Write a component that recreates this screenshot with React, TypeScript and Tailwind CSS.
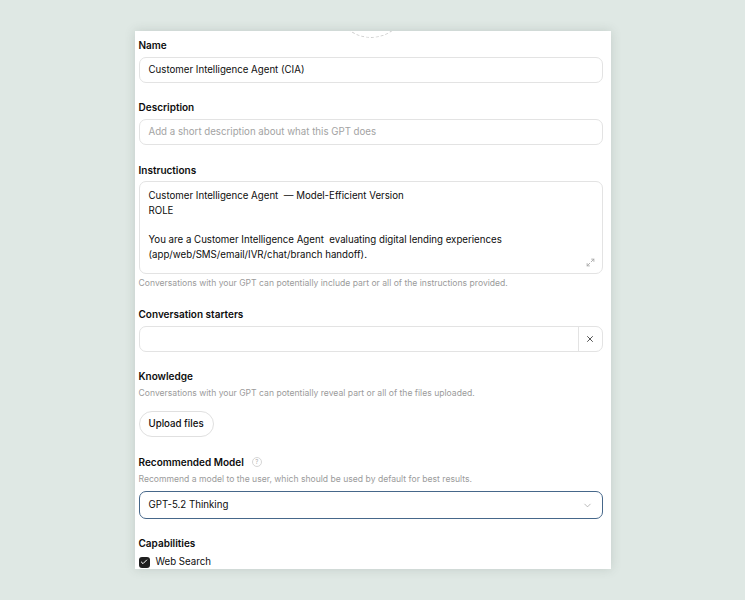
import { X, ChevronDown, Check } from "lucide-react";

function Label({ children, className = "" }: { children: React.ReactNode; className?: string }) {
    return (
        <div className={`h-[14px] leading-[14px] text-[10px] font-semibold text-[#0d0d0d] ${className}`}>
            {children}
        </div>
    );
}

function Hint({ children, className = "" }: { children: React.ReactNode; className?: string }) {
    return <div className={`h-[12px] leading-[12px] text-[8.6px] text-[#9b9b9b] ${className}`}>{children}</div>;
}

export default function App() {
    return (
        <div
            className="min-h-[600px] w-full bg-[#dfe8e4] flex justify-center pt-[31px]"
            style={{ fontFamily: "Inter, 'Liberation Sans', sans-serif" }}
        >
            <div className="w-[476px] h-[538px] bg-white overflow-hidden pl-[4px] pr-[8px] shadow-[0_0_10px_rgba(60,80,70,0.18)]">
                {/* avatar placeholder, scrolled off the top */}
                <div className="h-[7px] flex justify-center">
                    <div className="w-[72px] h-[72px] shrink-0 -mt-[65px] rounded-full border border-dashed border-[#cfcfcf]" />
                </div>

                {/* Name */}
                <Label>Name</Label>
                <div className="mt-[5px] h-[26px] rounded-[7px] border border-[#e3e3e3] px-[9px] flex items-center text-[9.7px] text-[#0d0d0d]">
                    Customer Intelligence Agent (CIA)
                </div>

                {/* Description */}
                <Label className="mt-[17px]">Description</Label>
                <div className="mt-[5px] h-[26px] rounded-[7px] border border-[#e3e3e3] px-[9px] flex items-center text-[9.7px] text-[#a3a3a3]">
                    Add a short description about what this GPT does
                </div>

                {/* Instructions */}
                <Label className="mt-[18px]">Instructions</Label>
                <div className="relative mt-[4px] h-[93px] rounded-[7px] border border-[#e3e3e3] px-[9px] pt-[7px] text-[9.7px] leading-[14.7px] text-[#0d0d0d]">
                    <div>Customer Intelligence Agent&nbsp; — Model-Efficient Version</div>
                    <div>ROLE</div>
                    <div className="h-[14.7px]" />
                    <div>You are a Customer Intelligence Agent&nbsp; evaluating digital lending experiences</div>
                    <div>(app/web/SMS/email/IVR/chat/branch handoff).</div>
                    <svg
                        className="absolute right-[7px] bottom-[6px]"
                        width="9"
                        height="9"
                        viewBox="0 0 12 12"
                        fill="none"
                        stroke="#a8a8a8"
                        strokeWidth="1.2"
                        strokeLinecap="round"
                    >
                        <path d="M7.5 1.5h3v3M10.5 1.5L7 5M4.5 10.5h-3v-3M1.5 10.5L5 7" />
                    </svg>
                </div>
                <Hint className="mt-[3px]">
                    Conversations with your GPT can potentially include part or all of the instructions provided.
                </Hint>

                {/* Conversation starters */}
                <Label className="mt-[18px]">Conversation starters</Label>
                <div className="mt-[5px] h-[26px] rounded-[7px] border border-[#e3e3e3] flex">
                    <div className="flex-1" />
                    <div className="w-[24px] border-l border-[#e3e3e3] flex items-center justify-center">
                        <X size={10} strokeWidth={2} className="text-[#333]" />
                    </div>
                </div>

                {/* Knowledge */}
                <Label className="mt-[17px]">Knowledge</Label>
                <Hint className="mt-[4px]">
                    Conversations with your GPT can potentially reveal part or all of the files uploaded.
                </Hint>
                <div className="mt-[12px] h-[26px] flex">
                    <button className="h-[26px] px-[9px] rounded-full border border-[#e0e0e0] text-[9.7px] font-medium text-[#0d0d0d]">
                        Upload files
                    </button>
                </div>

                {/* Recommended Model */}
                <div className="mt-[18px] h-[14px] flex items-center gap-[8px]">
                    <Label>Recommended Model</Label>
                    <div className="w-[10px] h-[10px] rounded-full border border-[#d6d6d6] flex items-center justify-center text-[6px] leading-none text-[#b0b0b0]">
                        ?
                    </div>
                </div>
                <Hint className="mt-[4px]">Recommend a model to the user, which should be used by default for best results.</Hint>
                <div className="mt-[6px] h-[28px] rounded-[7px] border-[1.5px] border-[#46678a] px-[9px] flex items-center justify-between text-[9.7px] text-[#0d0d0d]">
                    <span>GPT-5.2 Thinking</span>
                    <ChevronDown size={11} strokeWidth={1.5} className="text-[#9a9a9a]" />
                </div>

                {/* Capabilities */}
                <Label className="mt-[17px]">Capabilities</Label>
                <div className="mt-[5px] h-[14px] flex items-center gap-[6px]">
                    <div className="w-[11px] h-[11px] rounded-[3px] bg-[#1f1f1f] flex items-center justify-center">
                        <Check size={8} strokeWidth={3} className="text-white" />
                    </div>
                    <span className="text-[9.7px] leading-[14px] text-[#0d0d0d]">Web Search</span>
                </div>
            </div>
        </div>
    );
}
